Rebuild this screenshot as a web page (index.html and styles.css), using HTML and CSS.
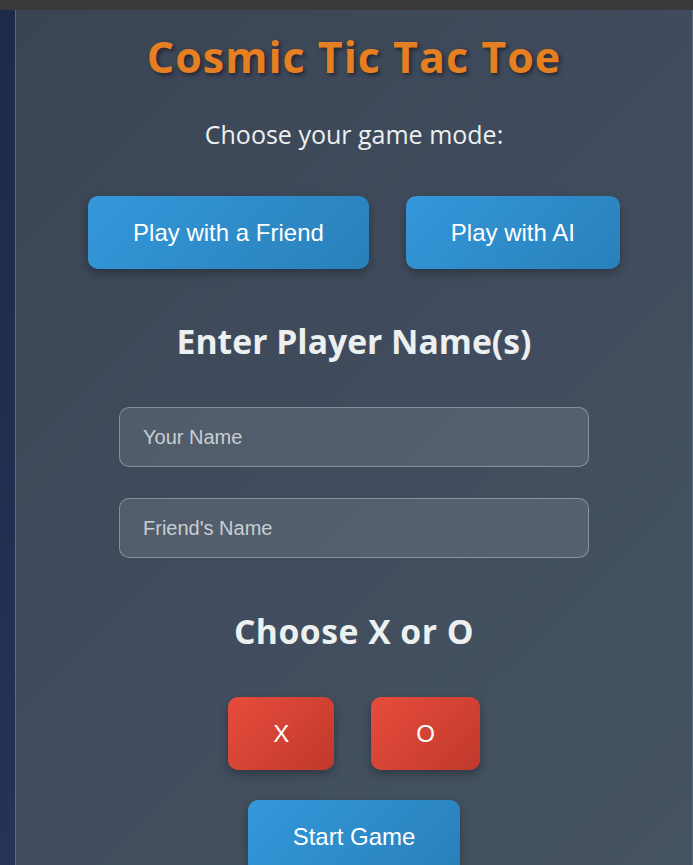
FILE: index.html
```html
<!DOCTYPE html>
<html lang="en">
<head>
<meta charset="utf-8">
<title>Cosmic Tic Tac Toe</title>
<link rel="stylesheet" href="styles.css">
</head>
<body>
<div class="topbar"></div>
<div class="frame">
  <div class="side"></div>
  <main class="panel">
    <h1 class="title">Cosmic Tic Tac Toe</h1>
    <p class="subtitle">Choose your game mode:</p>
    <div class="row mode-row">
      <button class="btn btn-blue">Play with a Friend</button>
      <button class="btn btn-blue">Play with AI</button>
    </div>
    <h2 class="heading heading-names">Enter Player Name(s)</h2>
    <div class="inputs">
      <input class="name-input" type="text" placeholder="Your Name">
      <input class="name-input" type="text" placeholder="Friend's Name">
    </div>
    <h2 class="heading heading-symbol">Choose X or O</h2>
    <div class="row symbol-row">
      <button class="btn btn-red">X</button>
      <button class="btn btn-red">O</button>
    </div>
    <div class="row start-row">
      <button class="btn btn-blue">Start Game</button>
    </div>
  </main>
</div>
</body>
</html>
```
FILE: styles.css
```css
* { box-sizing: border-box; }
html, body { margin: 0; height: 100%; }
body {
  background: #1f2b4c;
  font-family: "Open Sans", "Noto Sans", sans-serif;
  color: #ecf0f1;
  overflow: hidden;
  display: flex;
  flex-direction: column;
}
.topbar {
  height: 10px;
  background: #3a3a3a;
  flex: none;
}
.frame {
  flex: 1;
  display: flex;
}
.side {
  width: 15px;
  flex: none;
  background: linear-gradient(180deg, #1f2a4b 0%, #243356 100%);
}
.panel {
  flex: 1;
  border-left: 1px solid #5b6b86;
  border-right: 1px solid #5d6b7c;
  background: linear-gradient(135deg, #3a4455 0%, #414d5e 55%, #46545f 100%);
  display: flex;
  flex-direction: column;
  align-items: center;
  text-align: center;
}
.title {
  margin: 19px 0 0;
  font-size: 43px;
  line-height: 56px;
  letter-spacing: 1px;
  font-weight: 700;
  color: #e67e22;
  text-shadow: 2px 2px 4px rgba(0, 0, 0, 0.5);
}
.subtitle {
  margin: 33px 0 0;
  font-size: 25px;
  line-height: 32px;
}
.row {
  display: flex;
  justify-content: center;
  gap: 37px;
}
.mode-row { margin-top: 46px; }
.btn {
  font-family: "Liberation Sans", Arial, sans-serif;
  font-size: 24px;
  line-height: 27px;
  color: #fff;
  border: none;
  border-radius: 10px;
  padding: 23px 45px;
  box-shadow: 0 4px 10px rgba(0, 0, 0, 0.3);
  cursor: pointer;
}
.btn-blue { background: linear-gradient(135deg, #3498db 0%, #2980b9 100%); }
.btn-red { background: linear-gradient(135deg, #e74c3c 0%, #c0392b 100%); }
.heading {
  margin: 0;
  font-size: 33.7px;
  line-height: 44px;
  font-weight: 700;
  color: #ecf0f1;
}
.heading-names { margin-top: 50px; }
.inputs {
  margin-top: 44px;
  display: flex;
  flex-direction: column;
  gap: 31px;
}
.name-input {
  width: 470px;
  height: 60px;
  padding: 0 23px;
  font-family: "Liberation Sans", Arial, sans-serif;
  font-size: 20px;
  color: #ecf0f1;
  background: rgba(255, 255, 255, 0.1);
  border: 1px solid rgba(255, 255, 255, 0.3);
  border-radius: 10px;
  outline: none;
}
.name-input::placeholder { color: #c9ced3; }
.heading-symbol { margin-top: 51px; letter-spacing: 0.5px; }
.symbol-row { margin-top: 44px; }
.start-row { margin-top: 30px; }
```
